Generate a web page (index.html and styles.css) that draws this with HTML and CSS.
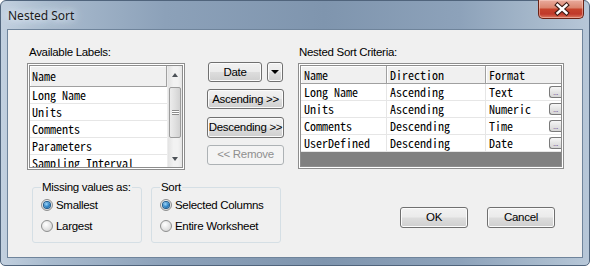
FILE: index.html
```html
<!DOCTYPE html>
<html lang="en">
<head>
    <meta charset="UTF-8">
    <title>Nested Sort</title>
    <link rel="stylesheet" href="styles.css">
</head>
<body>
<div class="window">
    <div class="titlebar">
        <span class="title">Nested Sort</span>
        <div class="close-btn">
            <svg width="46" height="19" viewBox="0 0 46 19">
                <path d="M18.5 5 L27.5 13 M27.5 5 L18.5 13" stroke="#3b1a14" stroke-width="4.6" stroke-linecap="square" fill="none"/>
                <path d="M18.5 5 L27.5 13 M27.5 5 L18.5 13" stroke="#ffffff" stroke-width="2.4" stroke-linecap="square" fill="none"/>
            </svg>
        </div>
    </div>
    <div class="client">
        <div class="top">
            <div class="col-left">
                <div class="label">Available Labels:</div>
                <div class="listbox">
                    <div class="list-body">
                        <div class="list-head">Name</div>
                        <div class="list-row">Long Name</div>
                        <div class="list-row">Units</div>
                        <div class="list-row">Comments</div>
                        <div class="list-row">Parameters</div>
                        <div class="list-row">Sampling Interval</div>
                    </div>
                    <div class="vscroll">
                        <div class="arrow up"></div>
                        <div class="track">
                            <div class="thumb"><span class="grip"></span></div>
                        </div>
                        <div class="arrow down"></div>
                    </div>
                </div>
            </div>

            <div class="col-buttons">
                <div class="date-row">
                    <button class="btn date-btn">Date</button>
                    <button class="btn drop-btn"><span class="caret"></span></button>
                </div>
                <button class="btn">Ascending &gt;&gt;</button>
                <button class="btn tall">Descending &gt;&gt;</button>
                <button class="btn" disabled>&lt;&lt; Remove</button>
            </div>

            <div class="col-right">
                <div class="label">Nested Sort Criteria:</div>
                <div class="grid">
                    <div class="grid-row head">
                        <div class="cell c1">Name</div>
                        <div class="cell c2">Direction</div>
                        <div class="cell c3">Format</div>
                    </div>
                    <div class="grid-row">
                        <div class="cell c1">Long Name</div>
                        <div class="cell c2">Ascending</div>
                        <div class="cell c3">Text<span class="more">...</span></div>
                    </div>
                    <div class="grid-row">
                        <div class="cell c1">Units</div>
                        <div class="cell c2">Ascending</div>
                        <div class="cell c3">Numeric<span class="more">...</span></div>
                    </div>
                    <div class="grid-row">
                        <div class="cell c1">Comments</div>
                        <div class="cell c2">Descending</div>
                        <div class="cell c3">Time<span class="more">...</span></div>
                    </div>
                    <div class="grid-row">
                        <div class="cell c1">UserDefined</div>
                        <div class="cell c2">Descending</div>
                        <div class="cell c3">Date<span class="more">...</span></div>
                    </div>
                    <div class="grid-empty"></div>
                </div>
            </div>
        </div>

        <div class="bottom">
            <fieldset class="group missing">
                <legend>Missing values as:</legend>
                <label class="radio"><span class="dot checked"></span>Smallest</label>
                <label class="radio"><span class="dot"></span>Largest</label>
            </fieldset>
            <fieldset class="group sort">
                <legend>Sort</legend>
                <label class="radio"><span class="dot checked"></span>Selected Columns</label>
                <label class="radio"><span class="dot"></span>Entire Worksheet</label>
            </fieldset>
            <div class="actions">
                <button class="btn action">OK</button>
                <button class="btn action">Cancel</button>
            </div>
        </div>
    </div>
</div>
</body>
</html>
```

FILE: styles.css
```css
* {
    box-sizing: border-box;
}

body {
    margin: 0;
    background-color: #fff;
    font-family: "Liberation Sans", Arial, sans-serif;
    font-size: 11.5px;
    letter-spacing: -0.3px;
    color: #000;
    white-space: nowrap;
}

/* window frame */
.window {
    width: 590px;
    height: 266px;
    border: 1px solid #50647c;
    border-radius: 6px 6px 5px 5px;
    padding: 0 6px 7px 6px;
    display: flex;
    flex-direction: column;
    background: linear-gradient(to right, #c2d0df 0%, #a9bbce 8%, #8ca1b9 28%, #7f95ae 55%, #8da2ba 78%, #a9bbcd 93%, #b7c7d8 100%);
}

.titlebar {
    height: 28px;
    display: flex;
    justify-content: space-between;
    align-items: flex-start;
}

.title {
    margin: 6px 0 0 1px;
    font-family: "Noto Sans", "Liberation Sans", sans-serif;
    font-size: 12px;
    letter-spacing: 0;
    color: #1b1b1b;
    text-shadow: 0 0 6px #e6eef6, 0 0 10px #dbe6f1, 0 0 14px #d3dfec;
}

.close-btn {
    width: 46px;
    height: 19px;
    margin: -1px -1px 0 0;
    border: 1px solid #6a2215;
    border-top: none;
    border-radius: 0 0 5px 5px;
    background: linear-gradient(#e9ab9d 0%, #db8670 42%, #c6432c 52%, #c0392a 78%, #dc7a60 100%);
    box-shadow: inset 0 0 0 1px rgba(255, 220, 210, 0.45);
}

.close-btn svg {
    display: block;
}

.client {
    flex: 1;
    background-color: #f0f0f0;
    border: 1px solid #6f849b;
    padding: 14px 0 0 19px;
}

.label {
    height: 19px;
    line-height: 17px;
    padding-left: 2px;
}

.top {
    display: flex;
}

/* available labels list */
.col-left {
    width: 158px;
}

.listbox {
    height: 107px;
    border: 3px double #8d8d8d;
    background-color: #fff;
    display: flex;
    overflow: hidden;
}

.list-body {
    flex: 1;
    font-family: "Noto Sans Mono CJK SC", "Liberation Mono", monospace;
    font-size: 12px;
    letter-spacing: 0;
}

.list-head {
    height: 21px;
    line-height: 19px;
    padding-left: 2px;
    background-color: #f0f0f0;
    border-right: 1px solid #a0a0a0;
    border-bottom: 1px solid #a0a0a0;
    box-shadow: inset 1px 1px 0 #fff;
}

.list-row {
    height: 17px;
    line-height: 16px;
    padding-left: 2px;
    border-bottom: 1px solid #e6e6e6;
}

.vscroll {
    width: 15px;
    display: flex;
    flex-direction: column;
    background: linear-gradient(to right, #e3e3e3, #f2f2f2 40%, #f2f2f2 70%, #e6e6e6);
    border-left: 1px solid #ededed;
}

.arrow {
    height: 17px;
    display: flex;
    align-items: center;
    justify-content: center;
}

.arrow::after {
    content: "";
    border-left: 3.5px solid transparent;
    border-right: 3.5px solid transparent;
}

.arrow.up::after {
    border-bottom: 4px solid #4d5258;
}

.arrow.down::after {
    border-top: 4px solid #4d5258;
}

.track {
    flex: 1;
    padding-top: 4px;
}

.thumb {
    height: 51px;
    margin: 0 1px;
    border: 1px solid #9c9c9c;
    border-radius: 2px;
    background: linear-gradient(to right, #ececec, #e0e0e0 50%, #d2d2d2);
    display: flex;
    align-items: center;
    justify-content: center;
}

.grip {
    width: 7px;
    height: 5px;
    border-top: 1px solid #8a8a8a;
    border-bottom: 1px solid #8a8a8a;
    background: linear-gradient(#fff 0 40%, #8a8a8a 40% 60%, #fff 60%);
}

/* middle buttons */
.col-buttons {
    margin-left: 22px;
    width: 77px;
    height: 121px;
    padding-top: 18px;
    display: flex;
    flex-direction: column;
    justify-content: space-between;
}

.date-row {
    display: flex;
    gap: 5px;
    padding-left: 1px;
}

.btn {
    height: 20px;
    padding: 0;
    border: 1px solid #707070;
    border-radius: 3px;
    background: linear-gradient(#f2f2f2 0%, #ebebeb 48%, #dddddd 52%, #cfcfcf 100%);
    box-shadow: inset 0 0 0 1px #fbfbfb;
    font-family: inherit;
    font-size: 11.5px;
    letter-spacing: -0.3px;
    color: #000;
    line-height: 17px;
    white-space: nowrap;
}

.btn.tall {
    height: 21px;
}

.btn:disabled {
    border-color: #adb2b5;
    background: #f4f4f4;
    box-shadow: none;
    color: #8f8f8f;
}

.date-btn {
    width: 54px;
}

.drop-btn {
    width: 16px;
    display: flex;
    align-items: center;
    justify-content: center;
}

.caret {
    border-left: 4px solid transparent;
    border-right: 4px solid transparent;
    border-top: 4px solid #000;
}

/* nested sort criteria grid */
.col-right {
    margin-left: 14px;
    width: 266px;
}

.col-right .label {
    padding-left: 1px;
}

.grid {
    height: 106px;
    border: 3px double #8d8d8d;
    display: flex;
    flex-direction: column;
    font-family: "Noto Sans Mono CJK SC", "Liberation Mono", monospace;
    font-size: 12px;
    letter-spacing: 0;
    background-color: #fff;
}

.grid-row {
    display: flex;
    height: 17px;
}

.grid-row.head {
    height: 18px;
}

.cell {
    padding-left: 3px;
    line-height: 16px;
    border-right: 1px solid #e6e6e6;
    border-bottom: 1px solid #e6e6e6;
}

.head .cell {
    background-color: #f0f0f0;
    border-right-color: #a0a0a0;
    border-bottom-color: #a0a0a0;
    box-shadow: inset 1px 1px 0 #fff;
    line-height: 17px;
}

.c1 {
    width: 86px;
}

.c2 {
    width: 99px;
}

.c3 {
    flex: 1;
    border-right: none;
    display: flex;
    justify-content: space-between;
}

.head .c3 {
    border-right: none;
}

.more {
    width: 12px;
    height: 12px;
    margin-top: 2px;
    border: 1px solid #7a7a7a;
    border-right: none;
    border-radius: 3px 0 0 3px;
    background: linear-gradient(#f6f6f6, #e4e4e4 50%, #d6d6d6);
    font-family: "Liberation Sans", sans-serif;
    font-size: 8px;
    line-height: 12px;
    color: #6a3c8e;
    text-align: center;
    letter-spacing: -0.5px;
}

.grid-empty {
    flex: 1;
    background-color: #808080;
}

/* bottom: radio groups and OK / Cancel */
.bottom {
    display: flex;
    margin-top: 10px;
}

.group {
    margin: 0;
    padding: 3px 0 8px 8px;
    border: 1px solid #d5dfe5;
    border-radius: 3px;
}

.group legend {
    padding: 0 1px;
    line-height: 14px;
}

.missing {
    width: 110px;
    margin-left: 5px;
}

.sort {
    width: 130px;
    margin-left: 9px;
}

.radio {
    display: flex;
    align-items: center;
    gap: 3px;
    height: 16px;
}

.radio + .radio {
    margin-top: 5px;
}

.dot {
    width: 12px;
    height: 12px;
    border: 1px solid #8e8f8f;
    border-radius: 50%;
    background: radial-gradient(circle at 40% 35%, #ffffff, #dcdcdc 70%, #cfcfcf);
    display: flex;
    align-items: center;
    justify-content: center;
}

.dot.checked::after {
    content: "";
    width: 6px;
    height: 6px;
    border-radius: 50%;
    background: radial-gradient(circle at 40% 35%, #9fd5f7, #2a82c6 55%, #0f4f8a);
    box-shadow: 0 0 0 1px #1e5a8c;
}

.actions {
    display: flex;
    gap: 19px;
    margin: 27px 0 0 119px;
}

.btn.action {
    width: 68px;
    height: 21px;
}
```
